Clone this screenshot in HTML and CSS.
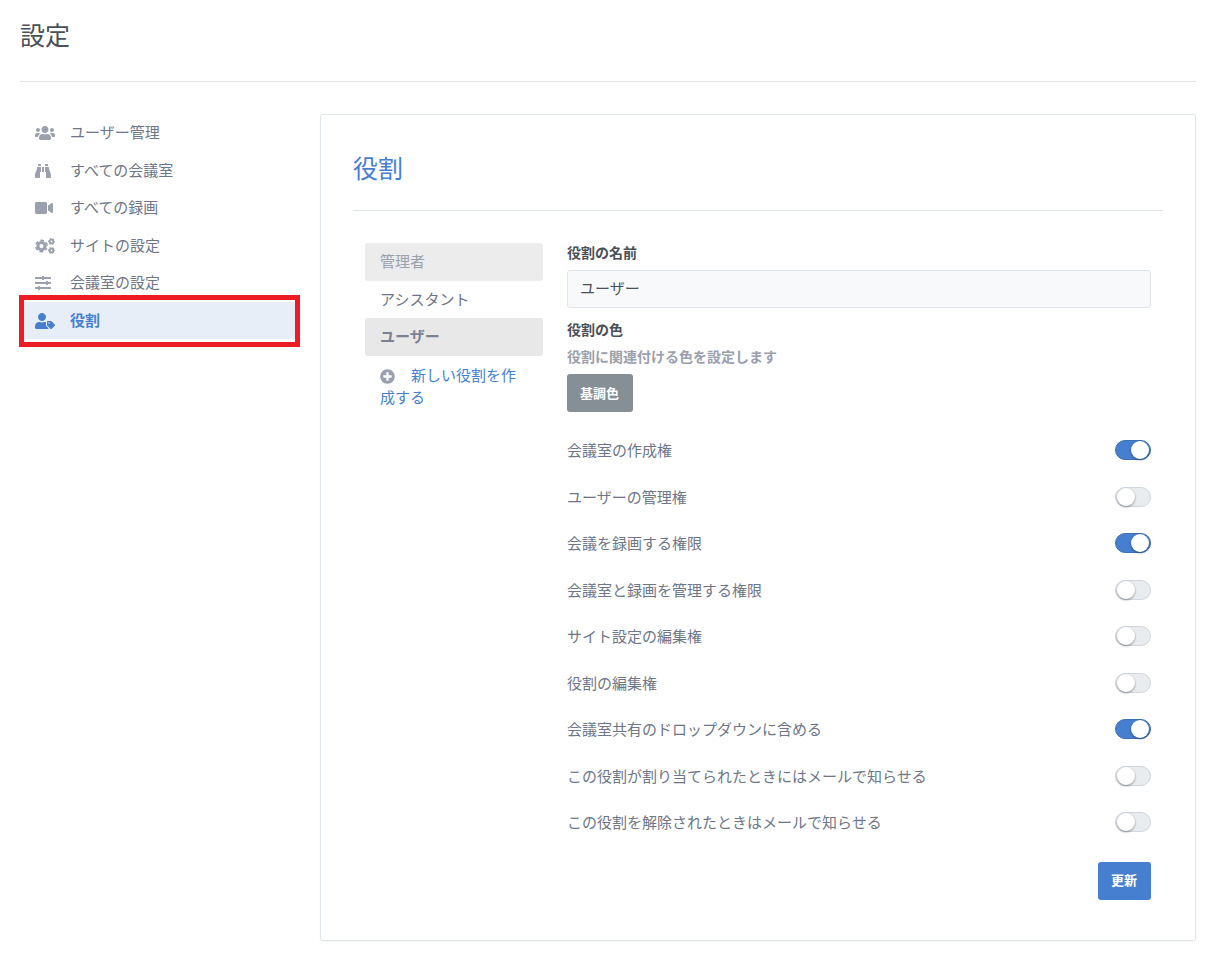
FILE: index.html
```html
<!DOCTYPE html>
<html lang="ja">
<head>
<meta charset="utf-8">
<meta name="viewport" content="width=device-width, initial-scale=1">
<title>設定</title>
<link rel="stylesheet" href="styles.css">
</head>
<body>
<div class="page">
  <header class="page-header">
    <h1 class="page-title">設定</h1>
  </header>
  <div class="layout">
    <nav class="side-nav" aria-label="設定">
      <a class="nav-item" href="#users">
        <svg class="icon" viewBox="0 0 640 512" width="20" height="16" aria-hidden="true"><path d="M96 224c35.300 0 64-28.700 64-64s-28.700-64-64-64-64 28.700-64 64 28.700 64 64 64zm448 0c35.300 0 64-28.700 64-64s-28.700-64-64-64-64 28.700-64 64 28.700 64 64 64zm32 32h-64c-17.600 0-33.500 7.100-45.100 18.600 40.300 22.100 68.900 62 75.100 109.400h66c17.700 0 32-14.300 32-32v-32c0-35.300-28.700-64-64-64zm-256 0c61.900 0 112-50.100 112-112S381.900 32 320 32 208 82.100 208 144s50.100 112 112 112zm76.800 32h-8.300c-20.800 10-43.900 16-68.500 16s-47.600-6-68.500-16h-8.300C179.600 288 128 339.600 128 403.200V432c0 26.500 21.500 48 48 48h288c26.500 0 48-21.500 48-48v-28.800c0-63.600-51.600-115.200-115.200-115.200zm-223.700-13.400C161.500 263.100 145.600 256 128 256H64c-35.300 0-64 28.700-64 64v32c0 17.700 14.300 32 32 32h65.900c6.300-47.400 34.900-87.300 75.200-109.400z"/></svg>
        <span>ユーザー管理</span>
      </a>
      <a class="nav-item" href="#rooms">
        <svg class="icon" viewBox="0 0 512 512" width="16" height="16" aria-hidden="true"><path d="M416 48c0-8.840-7.160-16-16-16h-64c-8.840 0-16 7.160-16 16v48h96V48zM63.910 159.990C61.400 253.840 3.460 274.220 0 404v44c0 17.670 14.330 32 32 32h96c17.670 0 32-14.330 32-32V288h32V128H95.840c-17.630 0-31.450 14.370-31.930 31.990zm384.180 0c-.48-17.620-14.300-31.990-31.930-31.990H320v160h32v160c0 17.670 14.330 32 32 32h96c17.670 0 32-14.330 32-32v-44c-3.460-129.780-61.400-150.160-63.910-244.010zM176 32h-64c-8.840 0-16 7.160-16 16v48h96V48c0-8.840-7.160-16-16-16zm48 256h64V128h-64v160z"/></svg>
        <span>すべての会議室</span>
      </a>
      <a class="nav-item" href="#recordings">
        <svg class="icon" viewBox="0 0 576 512" width="18" height="16" aria-hidden="true"><path d="M336.200 64H47.800C21.400 64 0 85.400 0 111.800v288.400C0 426.600 21.400 448 47.800 448h288.400c26.400 0 47.800-21.400 47.800-47.800V111.800c0-26.400-21.400-47.800-47.800-47.800zm189.400 37.700L416 177.300v157.400l109.600 75.500c21.200 14.600 50.400-.3 50.400-25.800V127.500c0-25.400-29.100-40.400-50.400-25.800z"/></svg>
        <span>すべての録画</span>
      </a>
      <a class="nav-item" href="#site">
        <svg class="icon" viewBox="0 0 640 512" width="20" height="16" aria-hidden="true">
          <g fill="none" stroke="currentColor">
            <circle cx="208" cy="256" r="116" stroke-width="96"/>
            <circle cx="208" cy="256" r="180" stroke-width="52" stroke-dasharray="112 76.500" stroke-dashoffset="56" transform="rotate(30 208 256)"/>
            <circle cx="528" cy="112" r="60" stroke-width="56"/>
            <circle cx="528" cy="112" r="90" stroke-width="38" stroke-dasharray="58 36.200" stroke-dashoffset="29"/>
            <circle cx="528" cy="400" r="60" stroke-width="56"/>
            <circle cx="528" cy="400" r="90" stroke-width="38" stroke-dasharray="58 36.200" stroke-dashoffset="29"/>
          </g>
        </svg>
        <span>サイトの設定</span>
      </a>
      <a class="nav-item" href="#room-settings">
        <svg class="icon" viewBox="0 0 512 512" width="16" height="16" aria-hidden="true"><path d="M496 384H160v-16c0-8.800-7.200-16-16-16h-32c-8.800 0-16 7.200-16 16v16H16c-8.800 0-16 7.200-16 16v32c0 8.800 7.200 16 16 16h80v16c0 8.800 7.200 16 16 16h32c8.800 0 16-7.200 16-16v-16h336c8.800 0 16-7.200 16-16v-32c0-8.800-7.200-16-16-16zm0-160h-80v-16c0-8.800-7.200-16-16-16h-32c-8.800 0-16 7.200-16 16v16H16c-8.800 0-16 7.200-16 16v32c0 8.800 7.200 16 16 16h336v16c0 8.800 7.200 16 16 16h32c8.800 0 16-7.200 16-16v-16h80c8.800 0 16-7.200 16-16v-32c0-8.800-7.200-16-16-16zm0-160H288V48c0-8.800-7.200-16-16-16h-32c-8.800 0-16 7.200-16 16v16H16C7.200 64 0 71.200 0 80v32c0 8.800 7.200 16 16 16h208v16c0 8.800 7.200 16 16 16h32c8.800 0 16-7.200 16-16v-16h208c8.800 0 16-7.200 16-16V80c0-8.800-7.200-16-16-16z"/></svg>
        <span>会議室の設定</span>
      </a>
      <a class="nav-item nav-item-active" href="#roles" aria-current="page">
        <svg class="icon" viewBox="0 0 640 512" width="20" height="16" aria-hidden="true"><path d="M630.600 364.900l-90.300-90.200c-12-12-28.300-18.700-45.300-18.700h-79.300c-17.700 0-32 14.300-32 32v79.200c0 17 6.700 33.200 18.700 45.200l90.300 90.200c12.500 12.500 32.800 12.500 45.300 0l92.500-92.500c12.600-12.500 12.600-32.700.1-45.200zm-182.800-21c-13.300 0-24-10.700-24-24s10.700-24 24-24 24 10.700 24 24c0 13.200-10.700 24-24 24zm-223.800-88c70.700 0 128-57.300 128-128C352 57.300 294.700 0 224 0S96 57.300 96 128c0 70.600 57.300 127.900 128 127.900zm127.800 111.200V294c-12.200-3.600-24.900-6.200-38.200-6.200h-16.700c-22.200 10.200-46.900 16-72.900 16s-50.600-5.800-72.900-16h-16.700C60.200 287.900 0 348.100 0 422.300v41.600c0 26.500 21.500 48 48 48h352c15.500 0 29.100-7.500 37.900-18.900l-58-58c-18.100-18.100-28.100-42.200-28.100-67.900z"/></svg>
        <span>役割</span>
      </a>
    </nav>

    <main class="card">
      <h2 class="card-title">役割</h2>
      <div class="card-body">
        <div class="role-list">
          <a class="role role-locked" href="#admin">管理者</a>
          <a class="role" href="#assistant">アシスタント</a>
          <a class="role role-active" href="#user">ユーザー</a>
          <a class="role-new" href="#new"><svg class="icon-plus" viewBox="0 0 512 512" width="15" height="15" aria-hidden="true"><path d="M256 8C119 8 8 119 8 256s111 248 248 248 248-111 248-248S393 8 256 8zm144 276c0 6.600-5.400 12-12 12h-92v92c0 6.600-5.400 12-12 12h-56c-6.600 0-12-5.400-12-12v-92h-92c-6.600 0-12-5.400-12-12v-56c0-6.600 5.400-12 12-12h92v-92c0-6.600 5.400-12 12-12h56c6.600 0 12 5.400 12 12v92h92c6.600 0 12 5.400 12 12v56z"/></svg>新しい役割を作成する</a>
        </div>

        <form class="role-form">
          <label class="form-label" for="role-name">役割の名前</label>
          <input class="form-input" id="role-name" type="text" value="ユーザー">
          <div class="form-label">役割の色</div>
          <div class="form-hint">役割に関連付ける色を設定します</div>
          <button class="btn btn-color" type="button">基調色</button>

          <div class="permissions">
            <label class="permission"><span>会議室の作成権</span><input class="switch" type="checkbox" checked></label>
            <label class="permission"><span>ユーザーの管理権</span><input class="switch" type="checkbox"></label>
            <label class="permission"><span>会議を録画する権限</span><input class="switch" type="checkbox" checked></label>
            <label class="permission"><span>会議室と録画を管理する権限</span><input class="switch" type="checkbox"></label>
            <label class="permission"><span>サイト設定の編集権</span><input class="switch" type="checkbox"></label>
            <label class="permission"><span>役割の編集権</span><input class="switch" type="checkbox"></label>
            <label class="permission"><span>会議室共有のドロップダウンに含める</span><input class="switch" type="checkbox" checked></label>
            <label class="permission"><span>この役割が割り当てられたときにはメールで知らせる</span><input class="switch" type="checkbox"></label>
            <label class="permission"><span>この役割を解除されたときはメールで知らせる</span><input class="switch" type="checkbox"></label>
          </div>

          <button class="btn btn-primary" type="submit">更新</button>
        </form>
      </div>
    </main>
  </div>
</div>
</body>
</html>
```
FILE: styles.css
```css
* {
  box-sizing: border-box;
}

body {
  margin: 0;
  background: #fff;
  color: #495057;
  font-family: "Noto Sans CJK JP", sans-serif;
  font-size: 15px;
  line-height: 1.5;
}

a {
  color: inherit;
  text-decoration: none;
}

.page {
  padding: 0 17px 15px 20px;
}

.page-header {
  padding: 17px 0 29px;
  border-bottom: 1px solid #e4e6e9;
}

.page-title,
.card-title {
  margin: 0;
  font-size: 25px;
  font-weight: 400;
  line-height: 35px;
}

.layout {
  display: grid;
  grid-template-columns: 276px minmax(0, 1fr);
  gap: 24px;
  align-items: start;
  padding-top: 32px;
}

/* Side navigation */
.nav-item {
  position: relative;
  display: grid;
  grid-template-columns: 35px 1fr;
  align-items: center;
  padding: 7px 15px 8px;
  color: #6e7687;
}

.icon {
  margin-top: 2px;
  color: #9aa0ac;
  fill: currentColor;
}

.nav-item-active {
  background: #e8eef8;
  color: #467fcf;
  font-weight: 700;
}

.nav-item-active .icon {
  color: #467fcf;
}

/* Red highlight frame around the current entry */
.nav-item-active::after {
  content: "";
  position: absolute;
  inset: -7px -4px -8px -1px;
  border: 5px solid #ed1c24;
  pointer-events: none;
}

/* Card */
.card {
  padding: 35px 32px 40px;
  border: 1px solid #e0e5ec;
  border-radius: 3px;
  box-shadow: 0 1px 2px rgba(0, 0, 0, 0.05);
}

.card-title {
  padding-bottom: 25px;
  border-bottom: 1px solid #dfe4e9;
  color: #467fcf;
}

.card-body {
  display: grid;
  grid-template-columns: 178px minmax(0, 1fr);
  gap: 24px;
  padding: 32px 12px 0;
}

.role {
  display: block;
  padding: 7px 15px 8px;
  border-radius: 3px;
  color: #6e7687;
}

.role-locked {
  background: #ececec;
  color: #9aa0ac;
}

.role-active {
  background: #e8e8e8;
  color: #7b8393;
  font-weight: 700;
}

.role-new {
  display: block;
  padding: 8px 15px;
  color: #467fcf;
}

.icon-plus {
  margin-right: 16px;
  color: #9aa0ac;
  fill: currentColor;
  vertical-align: -3px;
}

/* Form */
.form-label,
.form-hint {
  display: block;
  font-size: 14px;
  font-weight: 700;
  line-height: 19px;
}

.form-hint {
  margin: 8px 0;
  color: #9aa0ac;
}

.form-input {
  display: block;
  width: 100%;
  height: 38px;
  margin: 8px 0 12px;
  padding: 0 12px 3px;
  border: 1px solid #dfe4ec;
  border-radius: 3px;
  background: #f8f9fa;
  color: #495057;
  font: inherit;
}

.btn {
  display: block;
  height: 38px;
  padding: 0 14px 1px 13px;
  border: 0;
  border-radius: 3px;
  color: #fff;
  font: inherit;
  font-size: 13px;
  font-weight: 700;
}

.btn-color {
  background: #868e96;
}

.btn-primary {
  margin: 28px 0 0 auto;
  background: #467fcf;
}

.permissions {
  display: grid;
  gap: 24px;
  margin-top: 27px;
}

.permission {
  display: flex;
  align-items: center;
  justify-content: space-between;
  color: #6e7687;
}

.switch {
  display: flex;
  flex: none;
  align-items: center;
  width: 36px;
  height: 20px;
  margin: 0;
  padding: 0;
  appearance: none;
  border: 1px solid #cfd6df;
  border-radius: 10px;
  background: #e9ecef;
}

.switch::before {
  content: "";
  width: 18px;
  height: 18px;
  border-radius: 50%;
  border: 1px solid transparent;
  background: #fff padding-box;
  filter: drop-shadow(0 1px 1px rgba(0, 0, 0, 0.4));
}

.switch:checked {
  justify-content: flex-end;
  border-color: #3d70b8;
  background: #467fcf;
}
```
